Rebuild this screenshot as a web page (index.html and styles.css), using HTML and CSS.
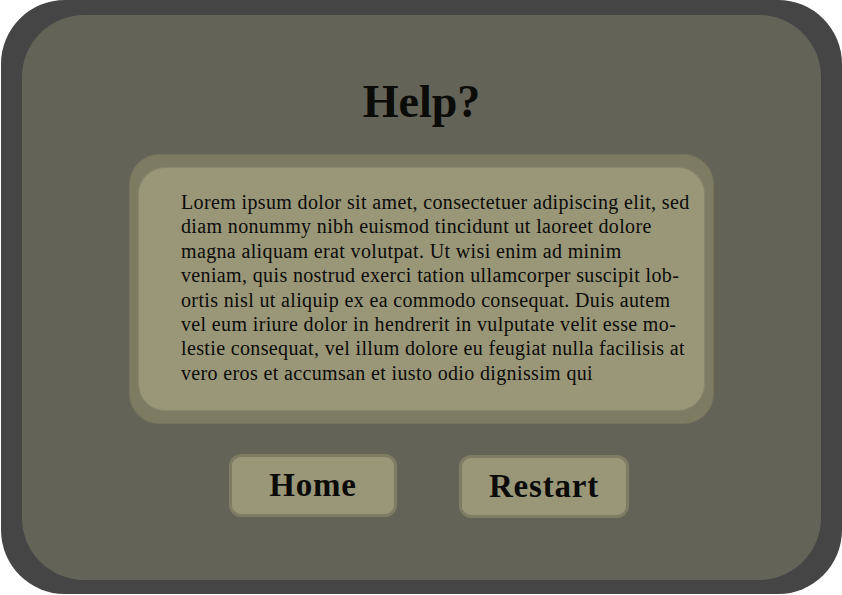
FILE: index.html
```html
<!DOCTYPE html>
<html>
<head>
<meta charset="utf-8">
<link rel="stylesheet" href="styles.css">
</head>
<body>
<div class="frame">
  <div class="panel">
    <h1 class="title">Help?</h1>
    <div class="textbox">
      <div class="textbox-inner">
        <p class="body-text">Lorem ipsum dolor sit amet, consectetuer adipiscing elit, sed<br>diam nonummy nibh euismod tincidunt ut laoreet dolore<br>magna aliquam erat volutpat. Ut wisi enim ad minim<br>veniam, quis nostrud exerci tation ullamcorper suscipit lob-<br>ortis nisl ut aliquip ex ea commodo consequat. Duis autem<br>vel eum iriure dolor in hendrerit in vulputate velit esse mo-<br>lestie consequat, vel illum dolore eu feugiat nulla facilisis at<br>vero eros et accumsan et iusto odio dignissim qui</p>
      </div>
    </div>
    <div class="buttons">
      <div class="btn">Home</div>
      <div class="btn btn-restart">Restart</div>
    </div>
  </div>
</div>
</body>
</html>
```
FILE: styles.css
```css
html, body {
  margin: 0;
  padding: 0;
  background: #ffffff;
}
.frame {
  margin-left: 1px;
  width: 841px;
  height: 594px;
  box-sizing: border-box;
  background: #454545;
  border-radius: 64px;
  padding: 15px 21px 14px 21px;
}
.panel {
  height: 100%;
  background: #636358;
  border-radius: 62px;
  display: flex;
  flex-direction: column;
  align-items: center;
  font-family: "Liberation Serif", "DejaVu Serif", serif;
  color: #0b0b08;
}
.title {
  margin: 57px 0 0 0;
  font-size: 46px;
  font-weight: bold;
  line-height: 60px;
  height: 82px;
}
.textbox {
  width: 585px;
  height: 270px;
  box-sizing: border-box;
  background: #7d7b62;
  border: 1px solid #75735d;
  border-radius: 30px;
  padding: 13px 9px 13px 9px;
}
.textbox-inner {
  height: 100%;
  box-sizing: border-box;
  background: #9a9779;
  border-radius: 26px;
  box-shadow: 0 0 1px 1px #8a886e;
  padding: 22px 0 0 42px;
}
.body-text {
  margin: 0;
  font-size: 20px;
  letter-spacing: 0.36px;
  line-height: 24.4px;
  white-space: nowrap;
  color: #0b0b08;
}
.buttons {
  display: flex;
  gap: 62px;
  margin-top: 30px;
  margin-left: 15px;
}
.btn {
  width: 168px;
  height: 63px;
  box-sizing: border-box;
  background: #9a9779;
  border: 3px solid #7e7c63;
  border-radius: 12px;
  display: flex;
  align-items: center;
  justify-content: center;
  font-size: 33px;
  letter-spacing: 0.8px;
  font-weight: bold;
}
.btn-restart {
  margin-top: 1px;
  width: 170px;
}
```
